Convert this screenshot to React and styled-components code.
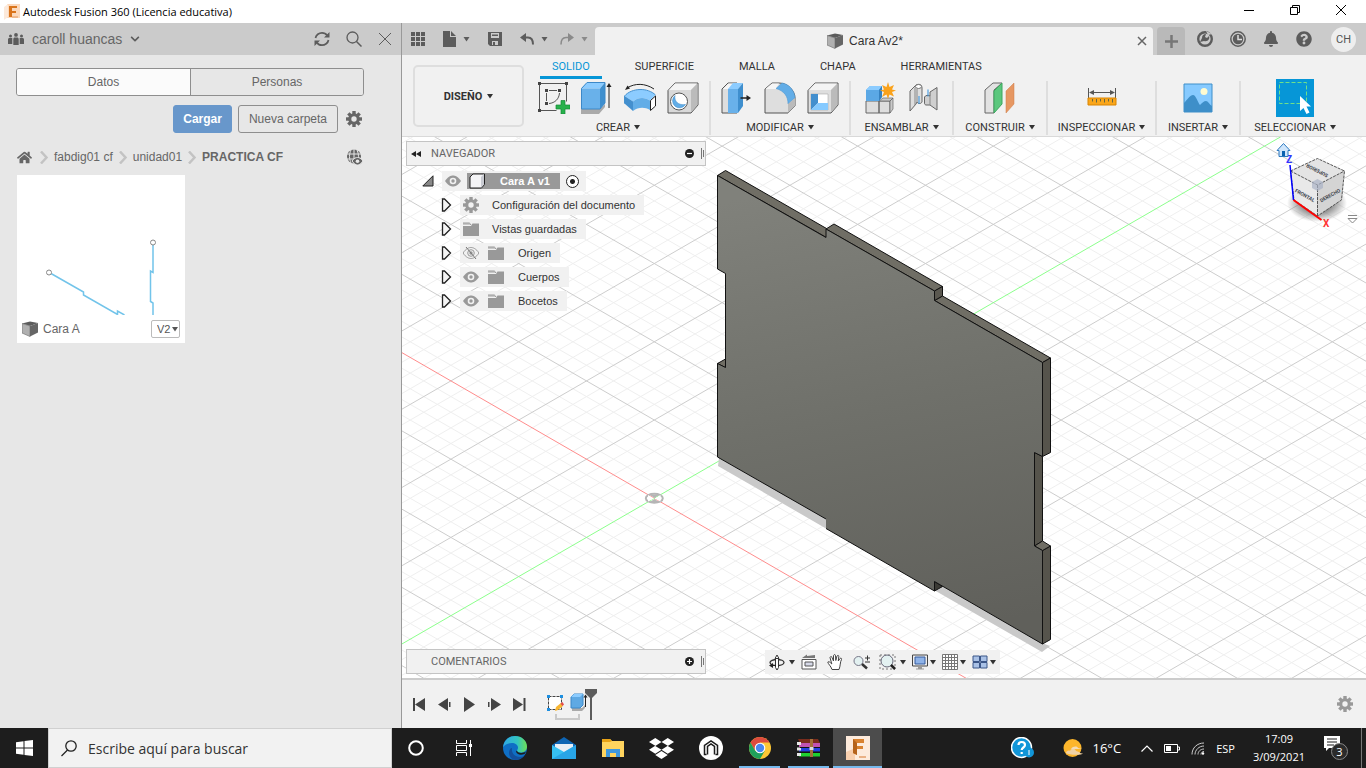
import React from 'react';
import styled, { createGlobalStyle } from 'styled-components';
import { FaBell, FaQuestionCircle, FaHome, FaDropbox, FaChevronDown } from 'react-icons/fa';

const GlobalStyle = createGlobalStyle`
* {
    box-sizing: border-box;
}
body {
    margin: 0;
    font-family: 'Liberation Sans', Arial, sans-serif;
    font-size: 12px;
    color: #333;
    overflow: hidden;
}
button, input, select {
    font: inherit;
    color: inherit;
    margin: 0;
    padding: 0;
    border: none;
    background: none;
}
a {
    color: inherit;
    text-decoration: none;
}
svg {
    display: block;
    flex: none;
}
`;

const Screen = styled.div`
display: flex;
flex-direction: column;
height: 100vh;
`;

const TitleBar = styled.header`
display: flex;
align-items: center;
height: 23px;
padding: 0 2px 0 4px;
background: #fff;
color: #000;
font-family: 'Open Sans', sans-serif;

h1 {
    flex: 1;
    margin: 0 0 0 3px;
    font-size: 11px;
    font-weight: 400;
    line-height: 20px;
}
`;

const WindowButton = styled.button`
display: flex;
justify-content: center;
width: 46px;
padding-bottom: 3px;
`;

const Main = styled.main`
display: flex;
flex: 1;
min-height: 0;
`;

/* data panel */
const DataPanel = styled.aside`
flex: 0 0 402px;
background: #e7e7e7;
border-right: 1px solid #999;
color: #666;
`;

const PanelHeader = styled.div`
display: flex;
align-items: center;
height: 32px;
padding: 0 9px 0 8px;
background: #cbcbcb;
font-size: 14px;
gap: 16px;
`;

const TeamButton = styled.button`
display: flex;
align-items: center;
flex: 1;
gap: 8px;
`;

const IconButton = styled.button`
display: flex;
align-items: center;
justify-content: center;
gap: 7px;
`;

const PanelBody = styled.div`
padding: 13px 37px 0 16px;
`;

const Segmented = styled.div`
display: grid;
grid-template-columns: 1fr 1fr;
height: 28px;
border: 1px solid #8e8e8e;
border-radius: 3px;
overflow: hidden;
`;

const Segment = styled.button`
background: ${(p) => (p.$active ? '#fbfbfb' : '#e7e7e7')};

& + & {
    border-left: 1px solid #8e8e8e;
}
`;

const Actions = styled.div`
display: flex;
justify-content: flex-end;
align-items: center;
gap: 6px;
margin-top: 9px;
`;

const ActionButton = styled.button`
height: 28px;
padding: 0 ${(p) => (p.$primary ? 9 : 10)}px;
border: 1px solid ${(p) => (p.$primary ? '#6897cb' : '#8e8e8e')};
border-radius: 3px;
background: ${(p) => (p.$primary ? '#6897cb' : 'transparent')};
color: ${(p) => (p.$primary ? '#fff' : '#666')};
font-weight: ${(p) => (p.$primary ? 700 : 400)};
`;

const GearSlot = styled(IconButton)`
width: 20px;
`;

const Breadcrumb = styled.nav`
display: flex;
align-items: center;
gap: 5px;
height: 18px;
margin-top: 15px;

b {
    flex: 1;
}
`;

const HomeLink = styled.a`
padding: 0 2px 0 1px;
`;

const FileCard = styled.article`
display: flex;
flex-direction: column;
width: 168px;
margin: 9px 0 0 1px;
background: #fff;
`;

const FileRow = styled.div`
display: flex;
align-items: center;
height: 28px;
padding: 0 5px;
gap: 5px;

span {
    flex: 1;
}
`;

const VersionBox = styled.label`
display: flex;
align-items: center;
width: 29px;
height: 18px;
padding: 0 1px 0 5px;
border: 1px solid #bbb;
border-radius: 2px;
font-size: 11px;

select {
    appearance: none;
    width: 14px;
    color: #555;
}
`;

/* workspace */
const Workspace = styled.section`
display: flex;
flex-direction: column;
flex: 1;
min-width: 0;
`;

const TopBar = styled.div`
display: flex;
align-items: center;
height: 32px;
background: #cbcbcb;
color: #5c5c5c;
`;

const QuickTools = styled.div`
display: flex;
align-items: center;
flex: 0 0 193px;
gap: 18px;
padding-left: 9px;
`;

const History = styled.div`
display: flex;
gap: 12px;
`;

const DocTab = styled.div`
display: flex;
align-items: center;
align-self: flex-end;
flex: 1;
height: 28px;
padding-right: 4px;
border-radius: 4px 4px 0 0;
background: #f1f1f1;
`;

const DocTitle = styled.span`
display: flex;
align-items: center;
justify-content: center;
flex: 1;
gap: 6px;
color: #333;
`;

const NewTab = styled.button`
display: flex;
align-items: center;
justify-content: center;
align-self: flex-end;
width: 28px;
height: 28px;
margin-left: 4px;
border-radius: 4px 4px 0 0;
background: #b9b9b9;
`;

const AccountTools = styled.div`
display: flex;
align-items: center;
gap: 17px;
padding: 0 10px 0 12px;
`;

const Avatar = styled.button`
width: 25px;
height: 25px;
margin-left: 2px;
border-radius: 50%;
background: #eee;
color: #555;
font-family: Roboto, sans-serif;
font-size: 11px;
`;

const Ribbon = styled.div`
display: flex;
height: 82px;
padding-left: 11px;
border-bottom: 1px solid #d9d9d9;
background: #f1f1f1;
font-family: Roboto, sans-serif;
font-size: 11px;
`;

const DesignButton = styled.button`
display: flex;
align-items: center;
justify-content: center;
gap: 5px;
width: 111px;
height: 62px;
margin-top: 10px;
border: 2px solid #dedede;
border-radius: 5px;
font-weight: 700;
`;

const RibbonBody = styled.div`
display: flex;
flex-direction: column;
flex: 1;
`;

const RibbonTabs = styled.div`
display: flex;
height: 24px;
padding-left: 16px;
gap: 21px;
`;

const RibbonTab = styled.button`
padding: 2px 12px 0;
border-bottom: 3px solid ${(p) => (p.$active ? '#0696d7' : 'transparent')};
color: ${(p) => (p.$active ? '#0696d7' : '#333')};
line-height: 19px;
`;

const Groups = styled.div`
display: flex;
flex: 1;
padding: 2px 0 2px 3px;
`;

const Group = styled.div`
display: flex;
flex-direction: column;
align-items: center;
flex: 0 0 ${(p) => p.$width}px;
border-right: 2px solid ${(p) => (p.$last ? 'transparent' : '#dedede')};
`;

const GroupIcons = styled.div`
display: flex;
align-items: center;
gap: 11px;
height: 38px;
margin-top: -2px;
`;

const GroupLabel = styled.button`
display: flex;
align-items: center;
gap: 4px;
height: 16px;
margin-top: 2px;
white-space: nowrap;
`;

const Viewport = styled.div`
position: relative;
display: flex;
flex-direction: column;
justify-content: space-between;
flex: 1;
min-height: 0;
padding: 4px;
background: #fff;
`;

const Scene = styled.svg`
position: absolute;
inset: 0;
width: 100%;
height: 100%;
`;

const ViewCube = styled.svg`
position: absolute;
top: 3px;
right: 4px;
font-family: Roboto, sans-serif;
`;

const BrowserPanel = styled.div`
position: relative;
width: 300px;
`;

const PaletteHeader = styled.div`
display: flex;
align-items: center;
width: 300px;
height: 25px;
padding: 0 0 0 4px;
border: 1px solid #c4c4c4;
background: #f1f1f1;
color: #666;
font-family: Roboto, sans-serif;
font-size: 11px;

span {
    flex: 1;
}
`;

const CollapseSlot = styled(IconButton)`
width: 10px;
margin-right: 10px;
`;

const Tree = styled.ul`
display: flex;
flex-direction: column;
gap: 4px;
margin: 5px 0 0;
padding: 0;
list-style: none;
font-size: 11px;
`;

const TreeItem = styled.li`
display: flex;
align-items: center;
gap: 8px;
height: 20px;
padding-left: ${(p) => (p.$root ? 16 : 35)}px;
`;

const TreeLabel = styled.div`
display: flex;
align-items: center;
gap: ${(p) => (p.$wide ? 9 : 13)}px;
height: 20px;
padding: 0 9px 0 3px;
background: #f1f1f1;

span:last-child {
    padding-left: ${(p) => (p.$wide ? 5 : 0)}px;
}
`;

const RootTreeLabel = styled(TreeLabel)`
gap: 6px;
padding-right: 7px;
`;

const RootLabel = styled.div`
display: flex;
align-items: center;
height: 16px;
padding: 0 10px 0 2px;
gap: 14px;
background: #999;
color: #fff;
font-weight: 700;
`;

const ActiveRadio = styled.input`
appearance: none;
width: 13px;
height: 13px;
border: 1px solid #222;
border-radius: 50%;
background: radial-gradient(#222 2px, #fff 3px);
`;

const BottomRow = styled.div`
position: relative;
display: flex;
gap: 59px;
`;

const NavBar = styled.div`
display: flex;
align-items: center;
height: 24px;
padding: 0 4px 0 3px;
gap: 6px;
margin-top: 1px;
background: #f1f1f1;
`;

const NavButton = styled.button`
display: flex;
align-items: center;
gap: ${(p) => (p.$tight ? 2 : 4)}px;
margin-right: ${(p) => (p.$plain ? 3 : 0)}px;
`;

const Timeline = styled.div`
display: flex;
align-items: center;
height: 50px;
padding: 0 13px 0 5px;
border-top: 2px solid #ccc;
background: #f1f1f1;
`;

const PlayButton = styled.button`
display: flex;
justify-content: center;
width: 25px;
`;

const TimelineTrack = styled.div`
flex: 1;
padding: 4px 0 0 14px;
`;

/* taskbar */
const Taskbar = styled.footer`
display: flex;
height: 40px;
background: #1d1d1d;
color: #fff;
font-family: 'Open Sans', sans-serif;
`;

const PinnedApps = styled.div`
display: flex;
margin-left: 2px;
`;

const TaskButton = styled.button`
display: flex;
align-items: center;
justify-content: center;
width: ${(p) => (p.$pinned ? 49 : 48)}px;
background: ${(p) => (p.$active ? '#4c4c4c' : 'transparent')};
`;

const RunningButton = styled(TaskButton)`
width: 41px;
margin: 0 4px;
border-top: 2px solid transparent;
border-bottom: 2px solid #76b9ed;
`;

const ActiveButton = styled(RunningButton)`
width: 49px;
margin: 0;
border-top-color: #4c4c4c;
`;

const SearchBox = styled.label`
display: flex;
align-items: center;
gap: 11px;
width: 344px;
padding-left: 12px;
border: 1px solid #d0d0d0;
background: #f2f2f2;

input {
    flex: 1;
    outline: none;
    font-size: 14px;
}
input::placeholder {
    color: #333;
    opacity: 1;
}
`;

const Tray = styled.div`
display: flex;
align-items: center;
flex: 1;
justify-content: flex-end;
`;

const Weather = styled.button`
display: flex;
align-items: center;
gap: 10px;
margin: 0 20px 0 28px;
font-size: 13px;
`;

const TrayIcons = styled.div`
display: flex;
align-items: center;
gap: 11px;
font-size: 11px;
`;

const Clock = styled.button`
margin: 0 19px 0 18px;
font-size: 11px;
line-height: 18px;
`;

const Notices = styled.button`
padding-right: 12px;
border-right: 1px solid #777;
margin-right: 4px;
height: 40px;
`;

const Caret = ({ color = '#333', size = 6 }) => (
    <svg width={size} height="5" viewBox="0 0 6 5"><path d="M0 0h6L3 4.5z" fill={color} /></svg>
);

const Gear = ({ size = 16, color = '#666', hole = '#f1f1f1' }) => (
    <svg width={size} height={size} viewBox="-8 -8 16 16" fill={color}>
        {[0, 45, 90, 135].map((a) => (
            <rect key={a} x="-1.7" y="-8" width="3.4" height="16" transform={`rotate(${a})`} />
        ))}
        <circle r="5.8" />
        <circle r="2.7" fill={hole} />
    </svg>
);

const Sep = () => (
    <svg width="10" height="13" viewBox="0 0 10 13"><path d="M2 .5l5.500 6L2 12.500" fill="none" stroke="#c3c3c3" strokeWidth="2.500" /></svg>
);

const BodyIcon = () => (
    <svg width="16" height="16" viewBox="0 0 16 16">
        <path d="M0 2.500 8 .5l8 1.500-8 3z" fill="#5c5c5c" />
        <path d="M0 2.500 8 5v10.500L0 12z" fill="#b0b0b0" stroke="#777" strokeWidth=".7" />
        <path d="M8 5l8-3v9.500l-8 4z" fill="#666" />
    </svg>
);

const Eye = ({ off }) => (
    <svg width="16" height="12" viewBox="0 0 16 12">
        <path d="M0 6C3 1.500 6 .5 8 .5s5 1 8 5.500c-3 4.500-6 5.500-8 5.500S3 10.500 0 6z" fill={off ? '#f1f1f1' : '#999'} stroke="#999" strokeWidth={off ? 1 : 0} />
        <circle cx="8" cy="6" r="3.3" fill={off ? 'none' : '#f1f1f1'} stroke={off ? '#999' : 'none'} />
        <circle cx="8" cy="6" r="1.7" fill="#999" />
        {off && <path d="M3 0l10 12" stroke="#777" />}
    </svg>
);

const Folder = () => (
    <svg width="16" height="14" viewBox="0 0 16 14">
        <path d="M0 .5h6.500L8.500 3H0zM0 4h8l1.500-2.500H16V14H0z" fill="#999" />
        <path d="M0 2.200h7" stroke="#eee" strokeWidth=".8" />
    </svg>
);

const Grip = () => (
    <svg width="4" height="11" viewBox="0 0 4 11"><path d="M.5 0v11M2.500 2v7" stroke="#777" /></svg>
);

const Toggle = ({ plus }) => (
    <svg width="9" height="9" viewBox="0 0 9 9">
        <circle cx="4.5" cy="4.5" r="4.5" fill="#222" />
        <path d={plus ? 'M2 4.500h5M4.500 2v5' : 'M2 4.500h5'} stroke="#fff" strokeWidth="1.2" />
    </svg>
);

/* ribbon drawings */
const icons = {
    sketch: (
        <>
            <path d="M1.500 1.500h27v18M1.500 1.500v27h17" fill="none" stroke="#555" />
            <g fill="#444"><path d="M0 0h3v3H0zM27 0h3v3h-3zM0 27h3v3H0zM7 7h3v3H7zM20 7h3v3h-3zM7 20h3v3H7z" /></g>
            <path d="M8.500 11v8M11 8.500h8M21.500 11c-.5 6-4.500 10-10.500 10.500" fill="none" stroke="#555" />
            <path d="M23 18.500h4v4.500h5v4h-5v5h-4v-5h-5v-4h5z" fill="#27b14b" stroke="#168a36" strokeWidth=".7" />
        </>
    ),
    extrude: (
        <>
            <path d="M0 27h19l5-5v3l-6 7H0z" fill="#aaa" />
            <path d="M0 6.500 6 .5h18l-5 6z" fill="#8cccff" />
            <path d="M0 6.500h19V27H0z" fill="#69b1ea" />
            <path d="M19 6.500 24 .5v20.500l-5 6z" fill="#3f8fce" />
            <path d="M.5 6.500 6 .5h18v20.500l-5 6H.5z" fill="none" stroke="#3c88c8" />
            <path d="M28 4v22" stroke="#222" /><path d="M28 1l2.500 4h-5z" fill="#222" />
        </>
    ),
    revolve: (
        <>
            <path d="M.5 14C8 5.500 24 5.500 31.500 13L26 18.500c-5-3.500-12-3.500-17 1z" fill="#8cccff" />
            <path d="M.5 14 9 19.500V29L.5 21.500z" fill="#438fce" />
            <path d="M9 19.500c5-4.500 12-4.500 17-1V28c-5-3-12-3-17 1z" fill="#62ade7" />
            <path d="M.5 21.500V14C8 5.500 24 5.500 31.500 13" fill="none" stroke="#4792cf" />
            <path d="M26.500 18.500l5-4.500v10l-5 4.500z" fill="#fff" stroke="#222" />
            <path d="M3 6c8-5 18-5 27 1" fill="none" stroke="#222" /><path d="M1 8l5-1.500-2.500-3z" fill="#222" />
        </>
    ),
    hole: (
        <>
            <path d="M1 8.500 8 1h23v22l-7 8H1z" fill="#d9d9d9" stroke="#555" />
            <path d="M2 8 8 1.500h22L24 8z" fill="#f4f4f4" /><path d="M24 8l6.500-6.500V23L24 30z" fill="#bbb" />
            <circle cx="12" cy="19.500" r="8.500" fill="#fff" stroke="#555" />
            <path d="M8 13.500a7 7 0 1 0 10.500 9c-7 1-11.500-3-10.500-9z" fill="#62ade7" stroke="#3a86c4" strokeWidth=".5" />
        </>
    ),
    pushpull: (
        <>
            <path d="M1 7 7 1h9v30H1z" fill="#dedede" stroke="#555" />
            <path d="M2 7 7.500 1.500H13L7.500 7z" fill="#f6f6f6" />
            <path d="M7 7l5-6h10l-5 6z" fill="#8cccff" /><path d="M7 7h10v24H7z" fill="#69b1ea" />
            <path d="M17 7l5-6v23l-5 7z" fill="#3f8fce" /><path d="M19.500 16H27" stroke="#222" strokeWidth="1.500" /><path d="M25.500 13l4.500 3-4.500 3z" fill="#222" />
        </>
    ),
    fillet: (
        <>
            <path d="M1 7 8 1h7c9 0 16 8 16 15v8l-7 7H1z" fill="#dedede" stroke="#555" />
            <path d="M1.500 7 8 1.500h7L12 7z" fill="#f6f6f6" />
            <path d="M12 6.500 18 1c8 1 13 9 13 15l-7 6c0-8-4-13-12-15.500z" fill="#62ade7" stroke="#4792cf" strokeWidth=".5" />
            <path d="M24 22l7-6v8l-7 7z" fill="#bbb" />
        </>
    ),
    shell: (
        <>
            <path d="M1 8.500 8 1h23v22l-7 8H1z" fill="#dedede" stroke="#555" />
            <path d="M2 8 8 1.500h22L24 8z" fill="#f4f4f4" /><path d="M24 8l6.500-6.500V23L24 30z" fill="#bbb" />
            <path d="M4 12h17v16H4z" fill="#fff" stroke="#999" strokeWidth=".5" />
            <path d="M4 12h7v9l-7 7z" fill="#438fce" /><path d="M4 28l7-7h10v7z" fill="#86caff" />
        </>
    ),
    component: (
        <>
            <path d="M2 19h13v12H2zM15 19h11v12H15z" fill="#dedede" stroke="#666" />
            <path d="M15 19l4-3h10l-3 3zM26 19l3-3v11l-3 4z" fill="#c9c9c9" stroke="#666" strokeWidth=".7" />
            <path d="M2 8l4-4h12v11l-3 4H2z" fill="#5ba8e5" /><path d="M2 8l4-4h12l-3 4z" fill="#8cccff" /><path d="M15 8l3-4v11l-3 4z" fill="#3681bf" />
            <path d="M24 0l1.500 5L30 3l-2 4.500 4 1-4 1.500 2 4.500-4.500-2L24 17l-1.500-4.500L18 15l2-5-4-1.500 4-1-2-4.500L22.500 5z" fill="#faa21b" />
        </>
    ),
    joint: (
        <>
            <path d="M3 9l6-6c3-1.500 6-.5 6 3v14c-1 2-4 2-5 0l-1 2-6 7z" fill="#dedede" stroke="#666" />
            <path d="M8 5.500V23M10 20V7" fill="none" stroke="#888" /><ellipse cx="11.500" cy="4.500" rx="3" ry="2" fill="#fff" stroke="#777" />
            <path d="M23 10l7-4.500V28l-7-5h-4c-1.500-.5-1.500-1-1.500-2v-6c1-2 4-2 5.500-1z" fill="#cfcfcf" stroke="#666" /><path d="M23 14v9" stroke="#888" />
            <path d="M12 14v8M21 7.500v7" stroke="#2f8fdd" />
        </>
    ),
    plane: (
        <>
            <path d="M1 8 9 1h9L10 8v23H1z" fill="#e2e2e2" stroke="#666" />
            <path d="M10 9l8-8v21l-8 9z" fill="#5bc77d" stroke="#3ca65e" /><path d="M22 9l8-8v21l-8 9z" fill="#e69762" stroke="#cf7c48" strokeWidth=".5" />
        </>
    ),
    measure: (
        <>
            <path d="M2.500 6v10M29.500 6v10M4 10.500h24" stroke="#555" /><path d="M3 10.500l5-2.500v5zM29 10.500 24 8v5z" fill="#555" />
            <path d="M2 16h28v7H2z" fill="#faa61a" stroke="#d98400" /><path d="M6.500 17v2.500M10.500 17v3.500M14.500 17v2.500M18.500 17v3.500M22.500 17v2.500M26.500 17v3.500" stroke="#664" />
        </>
    ),
    picture: (
        <>
            <path d="M2 2h28v28H2z" fill="#86caff" stroke="#3e8fc9" /><circle cx="22" cy="9.5" r="3.5" fill="#fffbd0" />
            <path d="M2 21c4-4 6-8 9-8s5 8 7 10c2-2 4-4 6-4s3 3 6 5v6H2z" fill="#3e8fc9" />
        </>
    ),
};

const RibbonIcon = ({ name }) => (
    <IconButton aria-label={name}><svg width="32" height="32" viewBox="0 0 32 32">{icons[name]}</svg></IconButton>
);

const SelectIcon = () => (
    <IconButton aria-label="Seleccionar">
        <svg width="38" height="38" viewBox="0 0 38 38">
            <path d="M0 0h38v38H0z" fill="#0696d7" />
            <path d="M3.500 3.500h27v21h-27z" fill="none" stroke="#6fe08a" strokeDasharray="4 2" />
            <path d="M24 17v15l3.500-3 3 6 3-1.500-3-6h4.500z" fill="#fff" />
        </svg>
    </IconButton>
);

const groups = [
    { label: 'CREAR', width: 184, icons: ['sketch', 'extrude', 'revolve', 'hole'] },
    { label: 'MODIFICAR', width: 140, icons: ['pushpull', 'fillet', 'shell'] },
    { label: 'ENSAMBLAR', width: 103, icons: ['component', 'joint'] },
    { label: 'CONSTRUIR', width: 94, icons: ['plane'] },
    { label: 'INSPECCIONAR', width: 109, icons: ['measure'] },
    { label: 'INSERTAR', width: 84, icons: ['picture'] },
    { label: 'SELECCIONAR', width: 110, icons: [], last: true },
];

const treeRows = [
    { label: 'Configuración del documento', icon: 'gear' },
    { label: 'Vistas guardadas' },
    { label: 'Origen', eye: 'off' },
    { label: 'Cuerpos', eye: 'on' },
    { label: 'Bocetos', eye: 'on' },
];

/* isometric floor grid, one major line every five cells */
const OX = 654.3;
const OY = 498.3;
const gridLines = (major) => {
    const parts = [];
    for (let i = -75; i <= 75; i++) {
        if (i === 0 || (i % 5 === 0) !== major) continue;
        const x = OX + i * 27.12;
        parts.push(`M${x - 1355} ${OY - 782}L${x + 1355} ${OY + 782}M${x - 1355} ${OY + 782}L${x + 1355} ${OY - 782}`);
    }
    return parts.join('');
};
const minorGrid = gridLines(false);
const majorGrid = gridLines(true);

const ModelScene = () => (
    <Scene viewBox="402 137 964 541" preserveAspectRatio="xMinYMin slice">
        <defs>
            <linearGradient id="face" x1=".4" y1="0" x2=".55" y2="1">
                <stop offset="0" stopColor="#80817b" />
                <stop offset=".5" stopColor="#6f706a" />
                <stop offset="1" stopColor="#60605b" />
            </linearGradient>
        </defs>
        <path d={minorGrid} stroke="#efefef" fill="none" />
        <path d={majorGrid} stroke="#cdcdcd" fill="none" />
        <path d="M-700.7 -283.7L2009.3 1280.3" stroke="#ff8c8c" />
        <path d="M-700.7 1280.3L2009.3 -283.7" stroke="#8cff8c" />
        <ellipse cx="654.3" cy="498.3" rx="8.5" ry="4.5" fill="none" stroke="#b5b5b5" strokeWidth="2" />
        <path d="M648 495l6 3.500-6 3zM660.500 495l-6 3.500 6 3z" fill="#fff" />
        <path d="M649 494.500h11l-5.500 3.500zM649 502.500h11l-5.500-3.500z" fill="#b5b5b5" />
        <path d="M719 458l-1 8 108 62.500v-10zM934 590l8-5 100 58 8 3-8 6z" fill="#c9c9c9" />
        <g stroke="#111" strokeLinejoin="round">
            <path d="M717.500 175.500l8-5 101 58v9zM826 229l8-5 108.500 62.500-8 4.500zM934.500 300.500l8-4.500 108 62-8 4.500z" fill="#706e65" />
            <path d="M934.500 291l8-4.500V296l-8 4.500z" fill="#5a5850" />
            <path d="M1042.500 362.500l8-4.500v94.500l-8 4zM1034.500 452.500l8 4V541l-8 5zM1042.500 550.500l8-4.500v93.500l-8 4.500z" fill="#56544c" />
            <path d="M1034.500 546l8-5 8 5-8 4.500zM717.500 363.500l8-4.500v8.500z" fill="#706e65" />
            <path d="M934.500 581.500l8 5-8 4.500z" fill="#3b3a35" />
            <path d="M717.500 175.500 826 237.500V229l108.500 62v9.500l108 62v94l-8-4V546l8 4.500V644l-108-62.500v9.500L826 528.500V519l-108.500-62v-93.500l8 4V273.500l-8-4.500z" fill="url(#face)" stroke="none" />
            <path d="M717.500 269V175.500L826 237.500V229l108.500 62v9.500l108 62v94l-8-4V546l8 4.500V644l-108-62.500v9.500L826 528.500M826 519l-108.500-62v-93.500l8 4V273.500l-8-4.500" fill="none" />
        </g>
    </Scene>
);

const Cube = () => (
    <ViewCube width="92" height="94" viewBox="1270 140 92 94">
        <defs>
            <radialGradient id="cubeShadow"><stop offset=".4" stopColor="#777" /><stop offset="1" stopColor="#777" stopOpacity="0" /></radialGradient>
        </defs>
        <ellipse cx="1317" cy="203" rx="30" ry="19" fill="url(#cubeShadow)" />
        <path d="M1290.500 171 1317.500 158.500l27 12.500-27 14z" fill="#e4e4e4" />
        <path d="M1290.500 171l27 14v31L1294 200z" fill="#e9e9e9" />
        <path d="M1317.500 185l27-14-3 29-24 16z" fill="#d4d4d4" />
        <path d="M1290.500 171l27-12.500 27 12.500-3 29-24 16L1294 200zM1290.500 171l27 14 27-14M1317.500 185v31" fill="none" stroke="#555" strokeDasharray="3 1" />
        <path d="M1312 182l5.500-3 5.500 3v6l-5.500 3-5.500-3z" fill="#a9b2c6" opacity=".7" />
        <g fill="#3b4048" fontSize="5" fontWeight="700" textAnchor="middle">
            <text transform="translate(1304 197) rotate(29)">FRONTAL</text>
            <text transform="translate(1331 197) rotate(-29)">DERECHO</text>
            <text transform="translate(1318 169) rotate(207)">SUPERIOR</text>
        </g>
        <path d="M1290 165l3.500 35" stroke="#00f" strokeWidth="1.5" />
        <path d="M1293.500 200l28 20" stroke="#f00" strokeWidth="2" />
        <text x="1286" y="163" fill="#33f" fontSize="10" fontWeight="700">Z</text>
        <text x="1323" y="227" fill="#f33" fontSize="10" fontWeight="700">X</text>
        <path d="M1277 150.500l6.500-7 6.500 7h-2v6h-9v-6z" fill="#cfe5fb" stroke="#2d79bf" />
        <path d="M1282 151h3v5h-3z" fill="#0a62b0" />
        <path d="M1348 215.500h9M1348 218.500h9l-4.500 4.500z" fill="#fff" stroke="#888" />
    </ViewCube>
);

const navIcons = [
    { w: 17, caret: true, label: 'Órbita', art: <><ellipse cx="9" cy="8.500" rx="7" ry="3" fill="none" stroke="#333" strokeWidth="1.300" /><path d="M7.500 4.500v9L9 16l1.500-2.500v-9M7 4.500 9 1l2 3.500z" fill="#fff" stroke="#333" /><path d="M1 11.500l4-2.500v2h3v1H5v2z" fill="#222" /></> },
    { w: 17, label: 'Mirar a', art: <><path d="M1 5.500h14V15H1z" fill="#fff" stroke="#555" /><path d="M4 8h8v4H4z" fill="#d6d9e8" stroke="#555" /><path d="M1 4l5-3.500V2l8-1v3z" fill="#777" /></> },
    { w: 17, label: 'Encuadre', art: <path d="M5 15.500C4 12 1 10 .8 8c1-1 2.500.5 4 2L3 3.500c.5-1.500 2-1 2 0L6.500 7 6.500 1.500c.5-1.300 2-1 2 0l.3 5 1.200-4.500c.5-1 2-.7 1.800.5L11.300 7 13 4.500c1-.8 2 0 1.500 1C13 8 13.500 12 12 15.500z" fill="#fff" stroke="#444" /> },
    { w: 17, label: 'Zoom', art: <><circle cx="5.500" cy="7" r="4.500" fill="#e3f1f1" stroke="#778" /><path d="M9 10l5 4.500" stroke="#333" strokeWidth="2.500" /><path d="M12 4h5M14.500 1.500v5M12 8h5" stroke="#333" /></> },
    { w: 17, caret: true, label: 'Ajustar', art: <><path d="M1 1h15v14H1z" fill="none" stroke="#777" strokeDasharray="2 2" /><circle cx="8" cy="7" r="6" fill="#e3f1f1" stroke="#667" /><path d="M12 11l4 4" stroke="#222" strokeWidth="2.500" /></> },
    { w: 16, caret: true, tight: true, label: 'Visualización', art: <><path d="M.5 1h15v11H.5z" fill="#eee" stroke="#444" /><path d="M3 3h10v7H3z" fill="#8fb3e8" stroke="#345a9c" /><path d="M6 12.500h4v2h2v1H4v-1h2z" fill="#999" /></> },
    { w: 16, caret: true, tight: true, label: 'Rejilla', art: <><path d="M.5.5h15v15H.5z" fill="#fff" /><path d="M.5.5h15v15H.5zM3.500.5v15M6.500.5v15M9.500.5v15M12.500.5v15M.5 3.500h15M.5 6.500h15M.5 9.500h15M.5 12.500h15" fill="none" stroke="#777" /></> },
    { w: 16, caret: true, tight: true, label: 'Ventanas', art: <path d="M1 2h6.500v5.500H1zM8.500 2H15v5.500H8.500zM1 8.500h6.500V14H1zM8.500 8.500H15V14H8.500z" fill="#a9c1e6" stroke="#3b5688" /> },
];

const playIcons = [
    ['Inicio', 'M0 1h2v13H0zM12 1v13L2 7.500z'],
    ['Atrás', 'M10 1v13L0 7.500zM11 5h1.500v5H11z'],
    ['Reproducir', 'M1 0v15l11-7.500z'],
    ['Adelante', 'M0 5h1.500v5H0zM3 1v13l10-6.500z'],
    ['Fin', 'M0 1v13l10-6.500zM10.500 1h2v13h-2z'],
];

export default function App() {
    return (
        <Screen>
            <GlobalStyle />
            <TitleBar>
                <svg width="16" height="16" viewBox="0 0 16 16">
                    <path d="M3 0h13v14H3z" fill="#fbd9bd" /><path d="M0 3l4-3v13l-4 3z" fill="#fce9da" />
                    <path d="M5 2h8v2H8v3h4v2H8v4H5z" fill="#d9741c" /><path d="M8 13h6" stroke="#e59a5e" />
                </svg>
                <h1>Autodesk Fusion 360 (Licencia educativa)</h1>
                <WindowButton aria-label="Minimizar"><svg width="10" height="10" viewBox="0 0 10 10"><path d="M0 5.500h10" stroke="#000" /></svg></WindowButton>
                <WindowButton aria-label="Restaurar"><svg width="10" height="10" viewBox="0 0 10 10"><path d="M.5 2.500h7v7h-7zM2.500 2.500v-2h7v7h-2" fill="none" stroke="#000" /></svg></WindowButton>
                <WindowButton aria-label="Cerrar"><svg width="10" height="10" viewBox="0 0 10 10"><path d="M0 0l10 10M10 0L0 10" stroke="#000" /></svg></WindowButton>
            </TitleBar>

            <Main>
                <DataPanel>
                    <PanelHeader>
                        <TeamButton>
                            <svg width="16" height="12" viewBox="0 0 16 12" fill="#5c5c5c">
                                <circle cx="8" cy="1.9" r="1.900" /><circle cx="2.500" cy="3" r="1.500" /><circle cx="13.500" cy="3" r="1.500" />
                                <path d="M5.300 12V6c0-1 .7-1.600 1.500-1.600h2.400c.8 0 1.500.6 1.500 1.600v6zM0 11V6.500C0 5.600.6 5 1.300 5h3v6zM11.700 11V5h3c.7 0 1.300.6 1.300 1.500V11z" />
                            </svg>
                            caroll huancas
                            <FaChevronDown size="10" color="#5c5c5c" />
                        </TeamButton>
                        <IconButton aria-label="Actualizar">
                            <svg width="16" height="16" viewBox="0 0 16 16">
                                <path d="M1.500 7C2 4 5 1.800 8 1.800c2.500 0 4 1 5 2.500M14.500 9c-.5 3-3.500 5.200-6.500 5.200-2.500 0-4-1-5-2.500" fill="none" stroke="#5c5c5c" strokeWidth="1.700" />
                                <path d="M15.500 1v5.500H10zM.5 15V9.500H6z" fill="#5c5c5c" />
                            </svg>
                        </IconButton>
                        <IconButton aria-label="Buscar">
                            <svg width="16" height="16" viewBox="0 0 16 16"><circle cx="6.500" cy="6.500" r="5.500" fill="none" stroke="#5c5c5c" strokeWidth="1.300" /><path d="M10.500 10.500l5 5" stroke="#5c5c5c" strokeWidth="1.500" /></svg>
                        </IconButton>
                        <IconButton aria-label="Cerrar panel">
                            <svg width="14" height="14" viewBox="0 0 14 14"><path d="M1 1l12 12M13 1L1 13" stroke="#5c5c5c" /></svg>
                        </IconButton>
                    </PanelHeader>
                    <PanelBody>
                        <Segmented>
                            <Segment $active>Datos</Segment>
                            <Segment>Personas</Segment>
                        </Segmented>
                        <Actions>
                            <ActionButton $primary>Cargar</ActionButton>
                            <ActionButton>Nueva carpeta</ActionButton>
                            <GearSlot aria-label="Ajustes"><Gear hole="#e7e7e7" /></GearSlot>
                        </Actions>
                        <Breadcrumb>
                            <HomeLink href="#inicio" aria-label="Inicio"><FaHome size="15" /></HomeLink>
                            <Sep />
                            <a href="#fabdig">fabdig01 cf</a>
                            <Sep />
                            <a href="#unidad">unidad01</a>
                            <Sep />
                            <b>PRACTICA CF</b>
                            <svg width="18" height="17" viewBox="0 0 18 17">
                                <circle cx="8" cy="7.500" r="7" fill="#666" />
                                <path d="M8 0v15M1 5h14M1 10h14M5 1c-2 4-2 9 0 13M11 1c2 4 2 9 0 13" stroke="#e7e7e7" fill="none" />
                                <path d="M6 12c2-3 4-3.500 5.500-3.500S15 9 17 12c-2 3-4 4-5.500 4S8 15 6 12z" fill="#666" stroke="#e7e7e7" /><circle cx="11.500" cy="12.200" r="1.800" fill="#e7e7e7" />
                            </svg>
                        </Breadcrumb>
                        <FileCard>
                            <svg width="168" height="140" viewBox="0 0 168 140">
                                <g fill="none" stroke="#72c4ea" strokeWidth="1.500">
                                    <path d="M34 98.500 66.500 117v3l34 19.500V136l7 4M136 70v27.500l-2.500-1.500v30.500l2.500 1.500v12" />
                                </g>
                                <g fill="#fff" stroke="#888"><circle cx="32" cy="97.500" r="2.500" /><circle cx="136" cy="67.500" r="2.500" /></g>
                            </svg>
                            <FileRow>
                                <BodyIcon />
                                <span>Cara A</span>
                                <VersionBox>
                                    <select aria-label="Versión"><option>V2</option></select>
                                    <Caret color="#555" size={8} />
                                </VersionBox>
                            </FileRow>
                        </FileCard>
                    </PanelBody>
                </DataPanel>

                <Workspace>
                    <TopBar>
                        <QuickTools>
                            <IconButton aria-label="Panel de datos">
                                <svg width="14" height="14" viewBox="0 0 14 14"><path d="M0 0h4v4H0zM5 0h4v4H5zM10 0h4v4h-4zM0 5h4v4H0zM5 5h4v4H5zM10 5h4v4h-4zM0 10h4v4H0zM5 10h4v4H5zM10 10h4v4h-4z" fill="#5c5c5c" /></svg>
                            </IconButton>
                            <IconButton aria-label="Archivo">
                                <svg width="13" height="16" viewBox="0 0 13 16"><path d="M0 0h7v6h6v10H0zM8 0l5 5H8z" fill="#5c5c5c" /></svg>
                                <Caret color="#5c5c5c" size={7} />
                            </IconButton>
                            <IconButton aria-label="Guardar">
                                <svg width="14" height="14" viewBox="0 0 14 14"><path d="M0 0h14v14H2l-2-2z" fill="#5c5c5c" /><path d="M3 1h8v5H3zM4 9h6v4H4z" fill="#cbcbcb" /><path d="M4 2.500h6v1.500H4zM5 10h2v3H5z" fill="#5c5c5c" /></svg>
                            </IconButton>
                            <History>
                                <IconButton aria-label="Deshacer">
                                    <svg width="14" height="12" viewBox="0 0 14 12"><path d="M6 0v9L0 4.500z" fill="#5c5c5c" /><path d="M4 4.500h4c3 0 5 2 5 7" fill="none" stroke="#5c5c5c" strokeWidth="2" /></svg>
                                    <Caret color="#5c5c5c" size={7} />
                                </IconButton>
                                <IconButton aria-label="Rehacer">
                                    <svg width="14" height="12" viewBox="0 0 14 12"><path d="M8 0v9l6-4.500z" fill="#8a8a8a" /><path d="M10 4.500H6c-3 0-5 2-5 7" fill="none" stroke="#8a8a8a" strokeWidth="1.500" /></svg>
                                    <Caret color="#8a8a8a" size={7} />
                                </IconButton>
                            </History>
                        </QuickTools>
                        <DocTab>
                            <DocTitle><BodyIcon />Cara Av2*</DocTitle>
                            <IconButton aria-label="Cerrar documento">
                                <svg width="14" height="10" viewBox="0 0 14 10"><path d="M3 1l8 8M11 1L3 9" stroke="#666" strokeWidth="1.500" /></svg>
                            </IconButton>
                        </DocTab>
                        <NewTab aria-label="Nuevo diseño"><svg width="13" height="13" viewBox="0 0 13 13"><path d="M0 6.500h13M6.500 0v13" stroke="#777" strokeWidth="2.500" /></svg></NewTab>
                        <AccountTools>
                            <IconButton aria-label="Extensiones">
                                <svg width="16" height="16" viewBox="0 0 16 16"><circle cx="8" cy="8" r="6.800" fill="none" stroke="#5c5c5c" strokeWidth="2.400" /><path d="M3 11l4-1c4 1 6-2 5-5l-2 2-2-1 1-3c-3 0-4 2-4 4z" fill="#5c5c5c" /><path d="M9 0l6 3-4 1z" fill="#cbcbcb" /></svg>
                            </IconButton>
                            <IconButton aria-label="Trabajos">
                                <svg width="16" height="16" viewBox="0 0 16 16"><circle cx="8" cy="8" r="7.200" fill="none" stroke="#5c5c5c" strokeWidth="1.500" /><circle cx="8" cy="8" r="5.200" fill="#5c5c5c" /><path d="M8 4v4.500h4" fill="none" stroke="#ddd" strokeWidth="1.500" /></svg>
                            </IconButton>
                            <IconButton aria-label="Notificaciones"><FaBell size="16" /></IconButton>
                            <IconButton aria-label="Ayuda"><FaQuestionCircle size="16" /></IconButton>
                            <Avatar>CH</Avatar>
                        </AccountTools>
                    </TopBar>

                    <Ribbon>
                        <DesignButton>DISEÑO <Caret /></DesignButton>
                        <RibbonBody>
                            <RibbonTabs>
                                <RibbonTab $active>SOLIDO</RibbonTab>
                                <RibbonTab>SUPERFICIE</RibbonTab>
                                <RibbonTab>MALLA</RibbonTab>
                                <RibbonTab>CHAPA</RibbonTab>
                                <RibbonTab>HERRAMIENTAS</RibbonTab>
                            </RibbonTabs>
                            <Groups>
                                {groups.map((g) => (
                                    <Group key={g.label} $width={g.width} $last={g.last}>
                                        <GroupIcons>
                                            {g.icons.map((name) => <RibbonIcon key={name} name={name} />)}
                                            {g.last && <SelectIcon />}
                                        </GroupIcons>
                                        <GroupLabel>{g.label} <Caret /></GroupLabel>
                                    </Group>
                                ))}
                            </Groups>
                        </RibbonBody>
                    </Ribbon>

                    <Viewport>
                        <ModelScene />
                        <Cube />
                        <BrowserPanel>
                            <PaletteHeader>
                                <CollapseSlot aria-label="Contraer"><svg width="10" height="6" viewBox="0 0 10 6"><path d="M5 0v6L0 3zM10 0v6L5 3z" fill="#222" /></svg></CollapseSlot>
                                <span>NAVEGADOR</span>
                                <IconButton aria-label="Minimizar navegador"><Toggle /><Grip /></IconButton>
                            </PaletteHeader>
                            <Tree>
                                <TreeItem $root>
                                    <svg width="12" height="12" viewBox="0 0 12 12"><path d="M11 .8V11H.8z" fill="#888" stroke="#222" /></svg>
                                    <RootTreeLabel>
                                        <Eye />
                                        <RootLabel>
                                            <svg width="17" height="16" viewBox="0 0 17 16"><path d="M1 4l3-3h11.500v10.500l-3 3.500H1z" fill="#f4f4f6" stroke="#222" /><path d="M12 4l3-3v10.500l-3 3z" fill="#c9cbd2" /></svg>
                                            <span>Cara A v1</span>
                                        </RootLabel>
                                        <ActiveRadio type="radio" aria-label="Activar Cara A v1" defaultChecked />
                                    </RootTreeLabel>
                                </TreeItem>
                                {treeRows.map((row) => (
                                    <TreeItem key={row.label}>
                                        <svg width="11" height="14" viewBox="0 0 11 14"><path d="M1.500 1h2l6 6-6 6h-2z" fill="#f4f4f4" stroke="#222" strokeWidth="1.300" /></svg>
                                        <TreeLabel $wide={!!row.eye}>
                                            {row.eye && <Eye off={row.eye === 'off'} />}
                                            {row.icon === 'gear' ? <Gear color="#999" /> : <Folder />}
                                            <span>{row.label}</span>
                                        </TreeLabel>
                                    </TreeItem>
                                ))}
                            </Tree>
                        </BrowserPanel>
                        <BottomRow>
                            <PaletteHeader>
                                <CollapseSlot as="div" />
                                <span>COMENTARIOS</span>
                                <IconButton aria-label="Abrir comentarios"><Toggle plus /><Grip /></IconButton>
                            </PaletteHeader>
                            <NavBar>
                                {navIcons.map((n) => (
                                    <NavButton key={n.label} aria-label={n.label} $tight={n.tight} $plain={!n.caret}>
                                        <svg width={n.w} height="16" viewBox={`0 0 ${n.w} 16`}>{n.art}</svg>
                                        {n.caret && <Caret />}
                                    </NavButton>
                                ))}
                            </NavBar>
                        </BottomRow>
                    </Viewport>

                    <Timeline>
                        {playIcons.map(([label, d]) => (
                            <PlayButton key={label} aria-label={label}><svg width="13" height="15" viewBox="0 0 13 15"><path d={d} fill="#444" /></svg></PlayButton>
                        ))}
                        <TimelineTrack>
                            <svg width="52" height="34" viewBox="0 0 52 34">
                                <path d="M2.500 7.500h13v13h-13z" fill="#fff" stroke="#444" strokeDasharray="3 1" />
                                <path d="M1 6h3v3H1zM14 6h3v3h-3zM1 19h3v3H1z" fill="#1e8fe0" />
                                <path d="M9 22l1-4 5-4 2 3-5 4z" fill="#f7b531" /><path d="M14.500 14.500l2-1.500 1.500 2.500-1.500 1.500z" fill="#e34b4b" />
                                <path d="M26 19h10l3-3v3l-3 3H26z" fill="#aaa" /><path d="M25 8l3-3h9v11l-3 3h-9z" fill="#5fa9e3" stroke="#3c88c8" /><path d="M25 8l3-3h9l-3 3z" fill="#8cccff" />
                                <path d="M39.500 7v11" stroke="#222" /><path d="M37.500 8.500l2-3 2 3z" fill="#222" />
                                <path d="M39 0h12v4l-5 5h-2l-5-5z" fill="#5c5c5c" /><path d="M45 8v23" stroke="#5c5c5c" strokeWidth="2" />
                                <path d="M10 25v5h23v-5" fill="none" stroke="#c9c9c9" strokeWidth="2" />
                            </svg>
                        </TimelineTrack>
                        <IconButton aria-label="Ajustes de cronología"><Gear color="#999" /></IconButton>
                    </Timeline>
                </Workspace>
            </Main>

            <Taskbar>
                <TaskButton aria-label="Inicio"><svg width="17" height="16" viewBox="0 0 17 16"><path d="M0 2.300 7.500 1.200v6.300H0zM8.500 1.100 17 0v7.500H8.500zM0 8.500h7.500v6.300L0 13.700zM8.500 8.500H17V16l-8.500-1.100z" fill="#fff" /></svg></TaskButton>
                <SearchBox>
                    <svg width="16" height="17" viewBox="0 0 16 17"><circle cx="10" cy="6" r="5.200" fill="none" stroke="#222" strokeWidth="1.300" /><path d="M6.500 10 .5 16" stroke="#222" strokeWidth="1.300" /></svg>
                    <input type="text" aria-label="Buscar" placeholder="Escribe aquí para buscar" />
                </SearchBox>
                <TaskButton aria-label="Cortana"><svg width="16" height="16" viewBox="0 0 16 16"><circle cx="8" cy="8" r="6.800" fill="none" stroke="#fff" strokeWidth="2" /></svg></TaskButton>
                <TaskButton aria-label="Vista de tareas"><svg width="17" height="16" viewBox="0 0 17 16"><path d="M.5 0v3.500h10V0M.5 16v-3.500h10V16M.5 5.500h10v5H.5zM14.500 0v16" fill="none" stroke="#fff" /><path d="M13 4h3v3h-3z" fill="#fff" /></svg></TaskButton>
                <PinnedApps>
                    <TaskButton $pinned aria-label="Edge">
                        <svg width="24" height="24" viewBox="0 0 24 24">
                            <defs><linearGradient id="edgeTop"><stop offset="0" stopColor="#2fa8e6" /><stop offset=".6" stopColor="#33c5c0" /><stop offset="1" stopColor="#6ede55" /></linearGradient></defs>
                            <circle cx="12" cy="12" r="12" fill="#0f6fc5" />
                            <path d="M0 11C1 4 6 0 12 0c7 0 12 5 12 10.500 0 4-3 6-6 6-2.500 0-4-1-4-2 0-.7 1-1.200 1-3C15 9 12 7 9 7c-4 0-7 1.500-9 4z" fill="url(#edgeTop)" />
                            <path d="M9 12c-1 5 3 9 8 9 2 0 4-.7 5-2-2 3-6 5-10 5-4-1-6-4-6-7 0-3 1.500-5 3-5z" fill="#134f9c" /><path d="M14 14.500c0 2.500 5 3.500 9 1-.3 1-.8 1.800-1.500 2.500-4 1.500-8 .5-8.500-2.500z" fill="#1d1d1d" />
                        </svg>
                    </TaskButton>
                    <TaskButton $pinned aria-label="Correo"><svg width="24" height="22" viewBox="0 0 24 22"><path d="M0 8 12 0l12 8v14H0z" fill="#0e65b4" /><path d="M3 7h18v8H3z" fill="#e8eef5" /><path d="M0 8l12 7 12-7v14H0z" fill="#36c0f3" /><path d="M0 22l24-14v14z" fill="#1f93e0" opacity=".6" /></svg></TaskButton>
                    <TaskButton $pinned aria-label="Explorador"><svg width="22" height="18" viewBox="0 0 22 18"><path d="M0 0h8l2 2h12v16H0z" fill="#ffd45e" /><path d="M0 0h8l2 2-2 1H0z" fill="#e8a317" /><path d="M4 10h14v8h-4v-4H8v4H4z" fill="#3f98dd" /></svg></TaskButton>
                    <TaskButton $pinned aria-label="Dropbox"><FaDropbox size="25" /></TaskButton>
                    <TaskButton $pinned aria-label="Casa"><svg width="24" height="24" viewBox="0 0 24 24"><circle cx="12" cy="12" r="12" fill="#fff" /><path d="M7.500 18.500H5.500V9.500L12 5l6.500 4.500v9h-2M8.500 18.500v-8L12 8l3.500 2.500v8" fill="none" stroke="#1d1d1d" strokeWidth="1.500" /></svg></TaskButton>
                    <RunningButton aria-label="Chrome">
                        <svg width="22" height="22" viewBox="0 0 22 22">
                            <circle cx="11" cy="11" r="11" fill="#fdc735" /><path d="M1.500 5.500A11 11 0 0 1 20.500 5.500H11L6.200 13.700z" fill="#dd4b3e" /><path d="M1.500 5.500A11 11 0 0 0 11 22l4.800-8.200L11 16l-4.800-2.300z" fill="#1fa05b" />
                            <circle cx="11" cy="11" r="5.300" fill="#fff" /><circle cx="11" cy="11" r="4.200" fill="#4a87f0" />
                        </svg>
                    </RunningButton>
                    <RunningButton aria-label="WinRAR">
                        <svg width="24" height="18" viewBox="0 0 24 18">
                            <path d="M1 0h20l2 4H3z" fill="#7a2d1d" /><path d="M2 4h21v4H2z" fill="#c153b2" /><path d="M2 9h21v3.500H2z" fill="#233fe0" /><path d="M2 14h21v3.500H2z" fill="#1ed02f" />
                            <path d="M0 3h4v3H0zM0 8.500h4v3H0zM0 14h4v3H0z" fill="#e8e8e8" /><path d="M3 8.500h20M3 13.300h20" stroke="#111" /><path d="M13 0h3v18h-3z" fill="#a5713a" /><path d="M12.500 8h4v3h-4z" fill="#ddd" />
                        </svg>
                    </RunningButton>
                    <ActiveButton $active aria-label="Fusion 360">
                        <svg width="24" height="24" viewBox="0 0 24 24">
                            <path d="M0 0h24v24H0z" fill="#fdebdc" /><path d="M0 16l9-4v12H0z" fill="#f8cfae" /><path d="M7 3h11v4h-7v3h6v3h-6v6l-4-2z" fill="#d9822f" /><path d="M7 3l4 4v12l-4-2z" fill="#b5631b" />
                            <path d="M13 20h7v2h-7z" fill="#eab286" />
                        </svg>
                    </ActiveButton>
                </PinnedApps>
                <Tray>
                    <IconButton aria-label="Ayuda de Windows">
                        <svg width="24" height="22" viewBox="0 0 24 22"><circle cx="10.500" cy="10.500" r="10" fill="#1296d8" stroke="#fff" strokeWidth="1.500" /><path d="M7.500 8c0-4 6.500-4 6.500 0 0 2.500-3.300 2.500-3.300 5M10.700 15v2" fill="none" stroke="#fff" strokeWidth="2.200" /><circle cx="18" cy="15.500" r="5" fill="#1296d8" /><path d="M18 13v5" stroke="#fff" /></svg>
                    </IconButton>
                    <Weather>
                        <svg width="20" height="18" viewBox="0 0 20 18"><circle cx="9.500" cy="9" r="9" fill="#fdb62b" /><path d="M3 14c0-2 3-3 4-2 1-3 5-3 6 0 3 0 4 3 7 2.500-1 2-15 1.500-17-.5z" fill="#f0d2a5" /><path d="M8 10c2-3 6-3 7-1l4 1z" fill="#f5dcb6" /></svg>
                        16°C
                    </Weather>
                    <TrayIcons>
                        <svg width="12" height="7" viewBox="0 0 12 7"><path d="M.5 6.500 6 1l5.500 5.500" fill="none" stroke="#fff" strokeWidth="1.200" /></svg>
                        <svg width="16" height="9" viewBox="0 0 16 9"><path d="M.5.5h13v8H.5zM14 3h1.500v3H14" fill="none" stroke="#fff" /><path d="M2 2h5v5H2z" fill="#fff" /></svg>
                        <svg width="14" height="13" viewBox="0 0 14 13"><path d="M1 12.500C1 6 6 1 13 1M4 12.500C4 8 8 4 13 4M7 12.500C7 9.500 9.500 7 13 7M10 12.500c0-1.500 1-3 3-3" fill="none" stroke="#ccc" /><circle cx="12" cy="11.500" r="1.200" fill="#fff" /></svg>
                        <span>ESP</span>
                    </TrayIcons>
                    <Clock>17:09<br />3/09/2021</Clock>
                    <Notices aria-label="3 notificaciones">
                        <svg width="25" height="24" viewBox="0 0 25 24">
                            <path d="M0 0h16v12H5l-3 3v-3H0z" fill="#fff" /><path d="M3 3h10M3 6h10M3 9h7" stroke="#1d1d1d" />
                            <circle cx="15.500" cy="15.500" r="8" fill="#2b2b2b" stroke="#888" /><text x="15.500" y="19.500" textAnchor="middle" fontSize="11" fill="#fff">3</text>
                        </svg>
                    </Notices>
                </Tray>
            </Taskbar>
        </Screen>
    );
}
